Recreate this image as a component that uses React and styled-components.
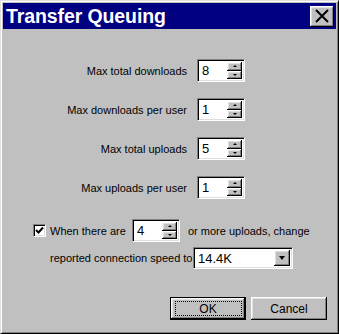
import styled, { createGlobalStyle } from "styled-components";

const GlobalStyle = createGlobalStyle`
  body {
    margin: 0;
    background: #c0c0c0;
    font-family: "Liberation Sans", Arial, sans-serif;
  }
`;

const Window = styled.div`
  box-sizing: border-box;
  width: 339px;
  height: 334px;
  background: #c0c0c0;
  border-top: 1px solid #dfdfdf;
  border-left: 1px solid #dfdfdf;
  border-right: 1px solid #000;
  border-bottom: 1px solid #000;
  box-shadow: inset 1px 1px 0 #fff, inset -1px -1px 0 #808080;
  padding: 2px;
  display: flex;
  flex-direction: column;
`;

const TitleBar = styled.div`
  height: 26px;
  background: #000080;
  display: flex;
  align-items: center;
  justify-content: space-between;
  padding: 0 2px 0 3px;
`;

const Title = styled.div`
  color: #fff;
  font-weight: bold;
  font-size: 19.5px;
  letter-spacing: -0.1px;
`;

const Raised = styled.button`
  box-sizing: border-box;
  background: #c0c0c0;
  border: none;
  padding: 0;
  box-shadow: inset -1px -1px 0 #000, inset 1px 1px 0 #fff,
    inset -2px -2px 0 #808080, inset 2px 2px 0 #dfdfdf;
  display: flex;
  align-items: center;
  justify-content: center;
`;

const CloseButton = styled(Raised)`
  width: 24px;
  height: 21px;
`;

const Body = styled.div`
  flex: 1;
  display: flex;
  flex-direction: column;
  font-size: 11px;
  color: #000;
`;

const LimitGrid = styled.div`
  display: grid;
  grid-template-columns: 184px 48px;
  column-gap: 10px;
  row-gap: 16px;
  align-items: center;
  margin-top: 30px;
`;

const Label = styled.span`
  text-align: right;
  font-size: 11px;
`;

const Sunken = styled.div`
  box-sizing: border-box;
  background: #fff;
  border-top: 1px solid #808080;
  border-left: 1px solid #808080;
  border-right: 1px solid #fff;
  border-bottom: 1px solid #fff;
  box-shadow: inset 1px 1px 0 #000, inset -1px -1px 0 #dfdfdf;
`;

const SpinBox = styled(Sunken)`
  width: 48px;
  height: 23px;
  display: flex;
  align-items: stretch;
  padding: 2px;
`;

const SpinValue = styled.span`
  flex: 1;
  font-size: 13px;
  padding-left: 2px;
  line-height: 17px;
`;

const SpinButtons = styled.div`
  width: 15px;
  display: flex;
  flex-direction: column;
`;

const SpinButton = styled(Raised)`
  flex: 1;
  width: 15px;
`;

const Arrow = styled.span`
  width: 0;
  height: 0;
  border-left: 2px solid transparent;
  border-right: 2px solid transparent;
  ${(p) =>
    p.$down
      ? "border-top: 2px solid #000;"
      : "border-bottom: 2px solid #000;"}
`;

const Spinner = ({ value }) => (
  <SpinBox>
    <SpinValue>{value}</SpinValue>
    <SpinButtons>
      <SpinButton>
        <Arrow />
      </SpinButton>
      <SpinButton>
        <Arrow $down />
      </SpinButton>
    </SpinButtons>
  </SpinBox>
);

const CheckRow = styled.div`
  display: flex;
  align-items: center;
  margin-top: 20px;
  padding-left: 30px;
  height: 23px;
`;

const CheckBox = styled(Sunken)`
  width: 13px;
  height: 13px;
  display: flex;
  align-items: center;
  justify-content: center;
  margin-right: 4px;
`;

const Text = styled.span`
  width: ${(p) => p.$w}px;
  white-space: nowrap;
`;

const SpeedRow = styled.div`
  display: flex;
  align-items: center;
  margin-top: 5px;
  padding-left: 47px;
  height: 22px;
`;

const Select = styled(Sunken)`
  width: 100px;
  height: 22px;
  display: flex;
  align-items: stretch;
  padding: 2px;
`;

const SelectValue = styled.span`
  flex: 1;
  font-size: 13px;
  line-height: 18px;
  padding-left: 2px;
`;

const DropButton = styled(Raised)`
  width: 16px;
`;

const DropArrow = styled.span`
  width: 0;
  height: 0;
  border-left: 3.5px solid transparent;
  border-right: 3.5px solid transparent;
  border-top: 4px solid #000;
`;

const ButtonRow = styled.div`
  display: flex;
  justify-content: flex-end;
  gap: 5px;
  margin-top: 28px;
  padding-right: 9px;
`;

const DialogButton = styled(Raised)`
  width: 76px;
  height: 23px;
  font-family: "Liberation Sans", Arial, sans-serif;
  font-size: 12px;
  color: #000;
  ${(p) =>
    p.$default &&
    `
    border: 1px solid #000;
    box-shadow: inset -1px -1px 0 #000, inset 1px 1px 0 #fff,
      inset -2px -2px 0 #808080, inset 2px 2px 0 #dfdfdf;
  `}
`;

const Focus = styled.span`
  box-sizing: border-box;
  width: 67px;
  height: 15px;
  border: 1px dotted #000;
  display: flex;
  align-items: center;
  justify-content: center;
`;

export default function App() {
  return (
    <>
      <GlobalStyle />
      <Window>
        <TitleBar>
          <Title>Transfer Queuing</Title>
          <CloseButton>
            <svg width="14" height="14" viewBox="0 0 14 14">
              <path d="M1 1 L13 13 M13 1 L1 13" stroke="#000" strokeWidth="2" />
            </svg>
          </CloseButton>
        </TitleBar>
        <Body>
          <LimitGrid>
            <Label>Max total downloads</Label>
            <Spinner value="8" />
            <Label>Max downloads per user</Label>
            <Spinner value="1" />
            <Label>Max total uploads</Label>
            <Spinner value="5" />
            <Label>Max uploads per user</Label>
            <Spinner value="1" />
          </LimitGrid>
          <CheckRow>
            <CheckBox>
              <svg width="9" height="9" viewBox="0 0 9 9">
                <path d="M1 4 L3.5 6.5 L8 1.5" stroke="#000" strokeWidth="2" fill="none" />
              </svg>
            </CheckBox>
            <Text $w={82}>When there are</Text>
            <Spinner value="4" />
            <Text $w={130} style={{ marginLeft: 8 }}>or more uploads, change</Text>
          </CheckRow>
          <SpeedRow>
            <Text $w={143}>reported connection speed to</Text>
            <Select>
              <SelectValue>14.4K</SelectValue>
              <DropButton>
                <DropArrow />
              </DropButton>
            </Select>
          </SpeedRow>
          <ButtonRow>
            <DialogButton $default>
              <Focus>OK</Focus>
            </DialogButton>
            <DialogButton>Cancel</DialogButton>
          </ButtonRow>
        </Body>
      </Window>
    </>
  );
}
